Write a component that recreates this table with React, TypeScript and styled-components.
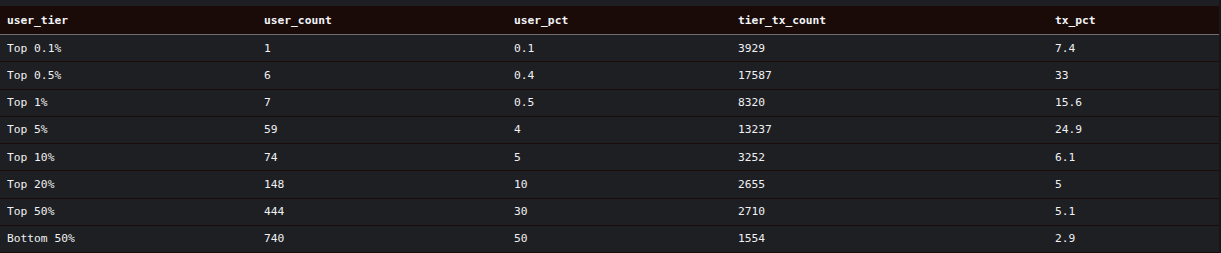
import React from 'react';
import styled, { createGlobalStyle } from 'styled-components';

const GlobalStyle = createGlobalStyle`
  html, body {
    margin: 0;
    padding: 0;
    background: #1e1f22;
  }
`;

const Wrapper = styled.div`
  padding-top: 6px;
  width: 1219px;
  border-right: 2px solid #161719;
  font-family: 'DejaVu Sans Mono', 'Liberation Mono', monospace;
  font-size: 11.25px;
  color: #f0f1f4;
`;

const Table = styled.table`
  width: 100%;
  border-collapse: collapse;
  table-layout: fixed;
`;

const Col = styled.col<{ $w?: number }>`
  width: ${p => (p.$w ? `${p.$w}px` : 'auto')};
`;

const HeadRow = styled.tr`
  background: #1a0b08;
  border-bottom: 1px solid #6e6e72;
`;

const Th = styled.th`
  height: 28px;
  padding: 0 0 0 7px;
  text-align: left;
  font-weight: bold;
  color: #f2f4f8;
`;

const Row = styled.tr`
  border-bottom: 1px solid #1b0c0a;
`;

const Td = styled.td`
  height: 26.25px;
  padding: 0 0 0 7px;
  white-space: nowrap;
`;

// full column widths, padding included
const columns = [
  { key: 'user_tier', w: 257 },
  { key: 'user_count', w: 250 },
  { key: 'user_pct', w: 224 },
  { key: 'tier_tx_count', w: 317 },
  { key: 'tx_pct' },
];

const rows = [
  ['Top 0.1%', '1', '0.1', '3929', '7.4'],
  ['Top 0.5%', '6', '0.4', '17587', '33'],
  ['Top 1%', '7', '0.5', '8320', '15.6'],
  ['Top 5%', '59', '4', '13237', '24.9'],
  ['Top 10%', '74', '5', '3252', '6.1'],
  ['Top 20%', '148', '10', '2655', '5'],
  ['Top 50%', '444', '30', '2710', '5.1'],
  ['Bottom 50%', '740', '50', '1554', '2.9'],
];

const App: React.FC = () => (
  <>
    <GlobalStyle />
    <Wrapper>
      <Table>
        <colgroup>
          {columns.map(c => (
            <Col key={c.key} $w={c.w} />
          ))}
        </colgroup>
        <thead>
          <HeadRow>
            {columns.map(c => (
              <Th key={c.key}>{c.key}</Th>
            ))}
          </HeadRow>
        </thead>
        <tbody>
          {rows.map(r => (
            <Row key={r[0]}>
              {r.map((cell, i) => (
                <Td key={i}>{cell}</Td>
              ))}
            </Row>
          ))}
        </tbody>
      </Table>
    </Wrapper>
  </>
);

export default App;
